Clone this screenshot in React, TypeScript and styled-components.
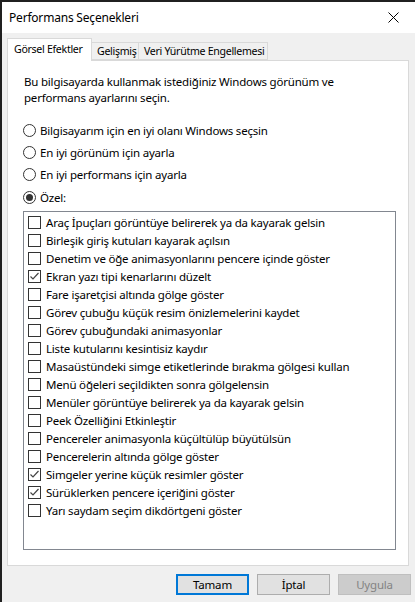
import React from "react";
import styled, { createGlobalStyle } from "styled-components";

const Global = createGlobalStyle`
  html, body { margin: 0; padding: 0; }
  body {
    width: 415px; height: 602px; overflow: hidden;
    background: #1e1e1e;
    font-family: "Segoe UI", "Noto Sans", "Open Sans", sans-serif;
    font-size: 11.5px; letter-spacing: -0.2px; color: #000;
  }
`;

const Screen = styled.div`
  width: 415px;
  height: 602px;
  padding: 2px 0 0 2px;
  box-sizing: border-box;
  background: #202020;
`;

const Window = styled.div`
  display: flex;
  flex-direction: column;
  height: 100%;
  background: #f0f0f0;
`;

const TitleBar = styled.div`
  height: 31px;
  background: #fff;
  display: flex;
  align-items: center;
  justify-content: space-between;
  padding: 0 7px 0 7px;
  flex-shrink: 0;
`;

const Title = styled.span`
  font-size: 12px;
`;

const Close = styled.div`
  width: 30px;
  display: flex;
  justify-content: center;
`;

const Body = styled.div`
  flex: 1;
  display: flex;
  flex-direction: column;
  padding: 5px 4px 0 5px;
`;

const TabRow = styled.div`
  display: flex;
  align-items: flex-end;
  height: 22px;
  position: relative;
  z-index: 1;
`;

const Tab = styled.div<{ $active?: boolean; $w: number }>`
  box-sizing: border-box;
  width: ${(p) => p.$w}px;
  height: ${(p) => (p.$active ? 23 : 18)}px;
  margin-bottom: ${(p) => (p.$active ? -1 : 0)}px;
  padding: ${(p) => (p.$active ? "0 0 2px 6px" : "0 0 0 5px")};
  font-size: 10.6px;
  letter-spacing: -0.3px;
  border: 1px solid #d9d9d9;
  border-bottom: ${(p) => (p.$active ? "none" : "1px solid #d9d9d9")};
  border-left: ${(p) => (p.$active ? "1px solid #d9d9d9" : "none")};
  background: ${(p) => (p.$active ? "#fff" : "#f0f0f0")};
  display: flex;
  align-items: center;
  white-space: nowrap;
  overflow: hidden;
`;

const Panel = styled.div`
  width: 402px;
  box-sizing: border-box;
  height: 506px;
  background: #fff;
  border: 1px solid #d9d9d9;
  padding: 13px 12px 0 15px;
  display: flex;
  flex-direction: column;
`;

const Desc = styled.p`
  margin: 0 0 13px 1px;
  line-height: 16px;
`;

const RadioRow = styled.label`
  display: flex;
  align-items: center;
  height: 22.3px;
  gap: 4px;
`;

const RadioCircle = styled.span<{ $on?: boolean }>`
  width: 13px;
  height: 13px;
  box-sizing: border-box;
  border: 1px solid #333;
  border-radius: 50%;
  background: #fff;
  display: flex;
  align-items: center;
  justify-content: center;
  &::after {
    content: "";
    width: 7px;
    height: 7px;
    border-radius: 50%;
    background: ${(p) => (p.$on ? "#333" : "transparent")};
  }
`;

const ListBox = styled.div`
  margin-top: 3px;
  height: 339px;
  box-sizing: border-box;
  border: 1px solid #828790;
  padding: 1px 0 0 4px;
  display: flex;
  flex-direction: column;
`;

const Item = styled.div`
  height: 18px;
  display: flex;
  align-items: center;
  gap: 5px;
  white-space: nowrap;
`;

const Box = styled.span`
  width: 13px;
  height: 13px;
  box-sizing: border-box;
  border: 1px solid #333;
  background: #fff;
  display: flex;
  align-items: center;
  justify-content: center;
`;

const Buttons = styled.div`
  display: flex;
  justify-content: flex-end;
  gap: 8px;
  padding-top: 8px;
`;

const Button = styled.div<{ $variant?: "default" | "normal" | "disabled" }>`
  width: 73px;
  height: 21px;
  box-sizing: border-box;
  display: flex;
  align-items: center;
  justify-content: center;
  background: ${(p) => (p.$variant === "disabled" ? "#cccccc" : "#e1e1e1")};
  color: ${(p) => (p.$variant === "disabled" ? "#838383" : "#000")};
  border: ${(p) =>
    p.$variant === "default"
      ? "2px solid #0078d7"
      : p.$variant === "disabled"
      ? "1px solid #bfbfbf"
      : "1px solid #adadad"};
`;

const items: [string, boolean][] = [
  ["Araç İpuçları görüntüye belirerek ya da kayarak gelsin", false],
  ["Birleşik giriş kutuları kayarak açılsın", false],
  ["Denetim ve öğe animasyonlarını pencere içinde göster", false],
  ["Ekran yazı tipi kenarlarını düzelt", true],
  ["Fare işaretçisi altında gölge göster", false],
  ["Görev çubuğu küçük resim önizlemelerini kaydet", false],
  ["Görev çubuğundaki animasyonlar", false],
  ["Liste kutularını kesintisiz kaydır", false],
  ["Masaüstündeki simge etiketlerinde bırakma gölgesi kullan", false],
  ["Menü öğeleri seçildikten sonra gölgelensin", false],
  ["Menüler görüntüye belirerek ya da kayarak gelsin", false],
  ["Peek Özelliğini Etkinleştir", false],
  ["Pencereler animasyonla küçültülüp büyütülsün", false],
  ["Pencerelerin altında gölge göster", false],
  ["Simgeler yerine küçük resimler göster", true],
  ["Sürüklerken pencere içeriğini göster", true],
  ["Yarı saydam seçim dikdörtgeni göster", false],
];

const radios: [string, boolean][] = [
  ["Bilgisayarım için en iyi olanı Windows seçsin", false],
  ["En iyi görünüm için ayarla", false],
  ["En iyi performans için ayarla", false],
  ["Özel:", true],
];

export default function App() {
  return (
    <>
      <Global />
      <Screen>
        <Window>
          <TitleBar>
            <Title>Performans Seçenekleri</Title>
            <Close>
              <svg width="11" height="11" viewBox="0 0 11 11">
                <path d="M0.5 0.5 L10.5 10.5 M10.5 0.5 L0.5 10.5" stroke="#000" strokeWidth="1" />
              </svg>
            </Close>
          </TitleBar>
          <Body>
            <TabRow>
              <Tab $active $w={85}>Görsel Efektler</Tab>
              <Tab $w={47}>Gelişmiş</Tab>
              <Tab $w={129}>Veri Yürütme Engellemesi</Tab>
            </TabRow>
            <Panel>
              <Desc>
                Bu bilgisayarda kullanmak istediğiniz Windows görünüm ve
                <br />
                performans ayarlarını seçin.
              </Desc>
              {radios.map(([t, on]) => (
                <RadioRow key={t}>
                  <RadioCircle $on={on} />
                  {t}
                </RadioRow>
              ))}
              <ListBox>
                {items.map(([t, on]) => (
                  <Item key={t}>
                    <Box>
                      {on && (
                        <svg width="11" height="11" viewBox="0 0 11 11">
                          <path d="M1.5 5.5 L4 8 L9.5 2" fill="none" stroke="#444" strokeWidth="1.2" />
                        </svg>
                      )}
                    </Box>
                    {t}
                  </Item>
                ))}
              </ListBox>
            </Panel>
            <Buttons>
              <Button $variant="default">Tamam</Button>
              <Button $variant="normal">İptal</Button>
              <Button $variant="disabled">Uygula</Button>
            </Buttons>
          </Body>
        </Window>
      </Screen>
    </>
  );
}
